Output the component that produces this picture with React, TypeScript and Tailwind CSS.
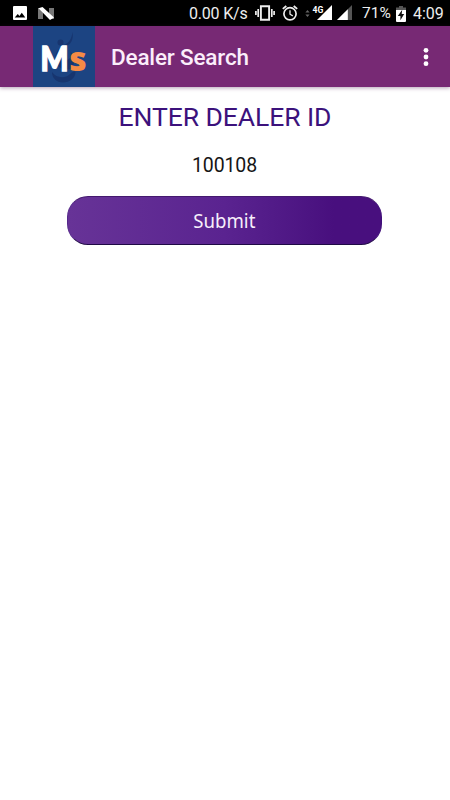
function PictureIcon() {
  return (
    <svg width="14" height="14" viewBox="0 0 14 14" className="shrink-0">
      <path fill="#fff" fillRule="evenodd" d="M1 0h12a1 1 0 0 1 1 1v12a1 1 0 0 1-1 1H1a1 1 0 0 1-1-1V1a1 1 0 0 1 1-1ZM1.7 11.5h10.6L8.8 6.8 6.4 9.9 4.8 8z" />
    </svg>
  );
}

function NougatIcon() {
  return (
    <svg width="16" height="13" viewBox="0 0 16 13" className="shrink-0">
      <path fill="#777" d="M0 1h5v11H0zM11 1h5v11h-5z" />
      <path fill="#fff" d="M.5 1.2 4.5 0 16 10.5 12 13z" />
    </svg>
  );
}

function VibrateIcon() {
  return (
    <svg width="20" height="16" viewBox="0 0 20 16" className="shrink-0">
      <path fill="none" stroke="#eee" strokeWidth="1.9" d="M5.9 1.3h8.2v13.4H5.9z" />
      <path fill="none" stroke="#eee" strokeWidth="1.7" d="M3.2 4v8M.9 6v4M16.8 4v8M19.1 6v4" />
    </svg>
  );
}

function AlarmIcon() {
  return (
    <svg width="16" height="16" viewBox="0 0 16 16" className="shrink-0" fill="none" stroke="#eee">
      <circle cx="8" cy="8.8" r="6.1" strokeWidth="1.7" />
      <path strokeWidth="1.8" d="M.8 3.9 4.3 1M15.2 3.9 11.7 1" />
      <path strokeWidth="1.3" d="M8 5.2v4l2.8 1.7" />
    </svg>
  );
}

function SignalIcons() {
  return (
    <svg width="48" height="18" viewBox="305 4 48 18" className="shrink-0">
      <path fill="#666" d="m305.4 12.5 2.1-2.5 2.1 2.5zM305.4 14.5h4.2l-2.1 2.5z" />
      <path fill="#fff" d="M332 5v15h-15z" />
      <text x="312.6" y="12.7" fill="#fff" stroke="#000" strokeWidth="1.4" paintOrder="stroke" fontSize="9.8" fontWeight="700" textLength="10.8" lengthAdjust="spacingAndGlyphs">
        4G
      </text>
      <path fill="#555" d="M352 5v15h-15z" />
      <path fill="#fff" d="M347.8 9.2V20H337z" />
    </svg>
  );
}

function BatteryIcon() {
  return (
    <svg width="10" height="16" viewBox="0 0 10 16" className="shrink-0">
      <path fill="#555" d="M3 0h4v1.5h3V5H0V1.5h3z" />
      <path fill="#fff" d="M0 4h10v11a1 1 0 0 1-1 1H1a1 1 0 0 1-1-1z" />
      <path fill="#111" d="M6.2 3.8 1.8 10h2.6v4.2L8.2 8H5.7z" />
    </svg>
  );
}

function StatusBar() {
  return (
    <div className="flex h-[26px] items-center bg-black text-[16px] leading-none text-[#eee]">
      <div className="flex w-[189px] items-center gap-[11px] pl-[13px]">
        <PictureIcon />
        <NougatIcon />
      </div>
      <span className="w-[66px] pt-[2px] whitespace-nowrap tracking-[-0.2px]">0.00 K/s</span>
      <VibrateIcon />
      <span className="w-[7px]" />
      <AlarmIcon />
      <span className="w-[7px]" />
      <SignalIcons />
      <span className="ml-[9px] w-[34px] pt-[2px] whitespace-nowrap text-[15.5px]">71%</span>
      <div className="pt-px">
        <BatteryIcon />
      </div>
      <span className="ml-[7px] pt-[2px] whitespace-nowrap">4:09</span>
    </div>
  );
}

function Logo() {
  return (
    <svg width="62" height="61" viewBox="0 0 62 61" className="shrink-0">
      <path fill="#1c4482" d="M0 0h62v61H0z" />
      <circle cx="27.5" cy="16.5" r="3" fill="#17356f" />
      <path
        fill="#17356f"
        d="M39.5 6c1 6-.5 11-5 13.5-5 2.7-8 5.5-7.5 10 .5 4 4 5.5 7 4.5 3.5-1 4.5-4.5 3.5-8.5 5 5.5 5 13 0 17.5-5.5 2-12.5-1-14.5-7-2.5-8.5 3-14.5 9-17.5 4-2 6.500-5 7.500-12.500zM19 46c4 6 13 7 18 2 2-2 4-3 5.500-2 0 6-6 10.500-12.500 10.500S19 52 19 46z"
      />
      <text y="44.500" fontSize="34">
        <tspan x="7.500" fill="#fff" stroke="#fff" strokeWidth="1.500" className="font-['Lato',sans-serif] font-black" textLength="28" lengthAdjust="spacingAndGlyphs">
          M
        </tspan>
        <tspan x="36.2" fill="#f58b45" className="font-['Open_Sans',sans-serif] font-extrabold" textLength="17.500" lengthAdjust="spacingAndGlyphs">
          s
        </tspan>
      </text>
    </svg>
  );
}

function AppBar() {
  return (
    <header className="flex h-[61px] items-center bg-[#772974] pl-[33px] shadow-[0_1px_4px_rgba(70,20,70,0.4)]">
      <Logo />
      <h1 className="ml-[16px] flex-1 pt-[2px] whitespace-nowrap text-[22.5px] font-medium leading-none tracking-[-0.17px] text-[#fbeefb]">
        Dealer Search
      </h1>
      <button aria-label="More options" className="mr-[21px]">
        <svg width="6" height="20" viewBox="0 0 6 20" fill="#fff">
          <circle cx="3" cy="3.3" r="2.4" />
          <circle cx="3" cy="10" r="2.4" />
          <circle cx="3" cy="16.7" r="2.4" />
        </svg>
      </button>
    </header>
  );
}

export default function App() {
  return (
    <div className="flex h-[800px] w-[450px] flex-col overflow-hidden bg-white font-['Roboto',sans-serif]">
      <StatusBar />
      <AppBar />
      <main className="flex flex-col items-center">
        <h2 className="mt-[14px] whitespace-nowrap text-[26.5px] leading-[32px] tracking-[-0.07px] text-[#3c127c]">ENTER DEALER ID</h2>
        <div className="mt-[21px] mr-[1px] text-[19.5px] leading-[24px] tracking-[-0.1px] text-[#151515]">100108</div>
        <button className="mt-[18px] mr-[1px] flex h-[49px] w-[315px] items-center justify-center rounded-[21px] border border-t-[#44196f] border-r-[#40107a] border-b-[#1f0a45] border-l-[#55288a] bg-linear-to-r from-[#673397] via-[#5a2390] to-[#480f7e] to-85% font-['Noto_Sans',sans-serif] text-[20px] leading-none text-[#f7effb]">
          <span className="scale-x-[0.93]">Submit</span>
        </button>
      </main>
    </div>
  );
}
